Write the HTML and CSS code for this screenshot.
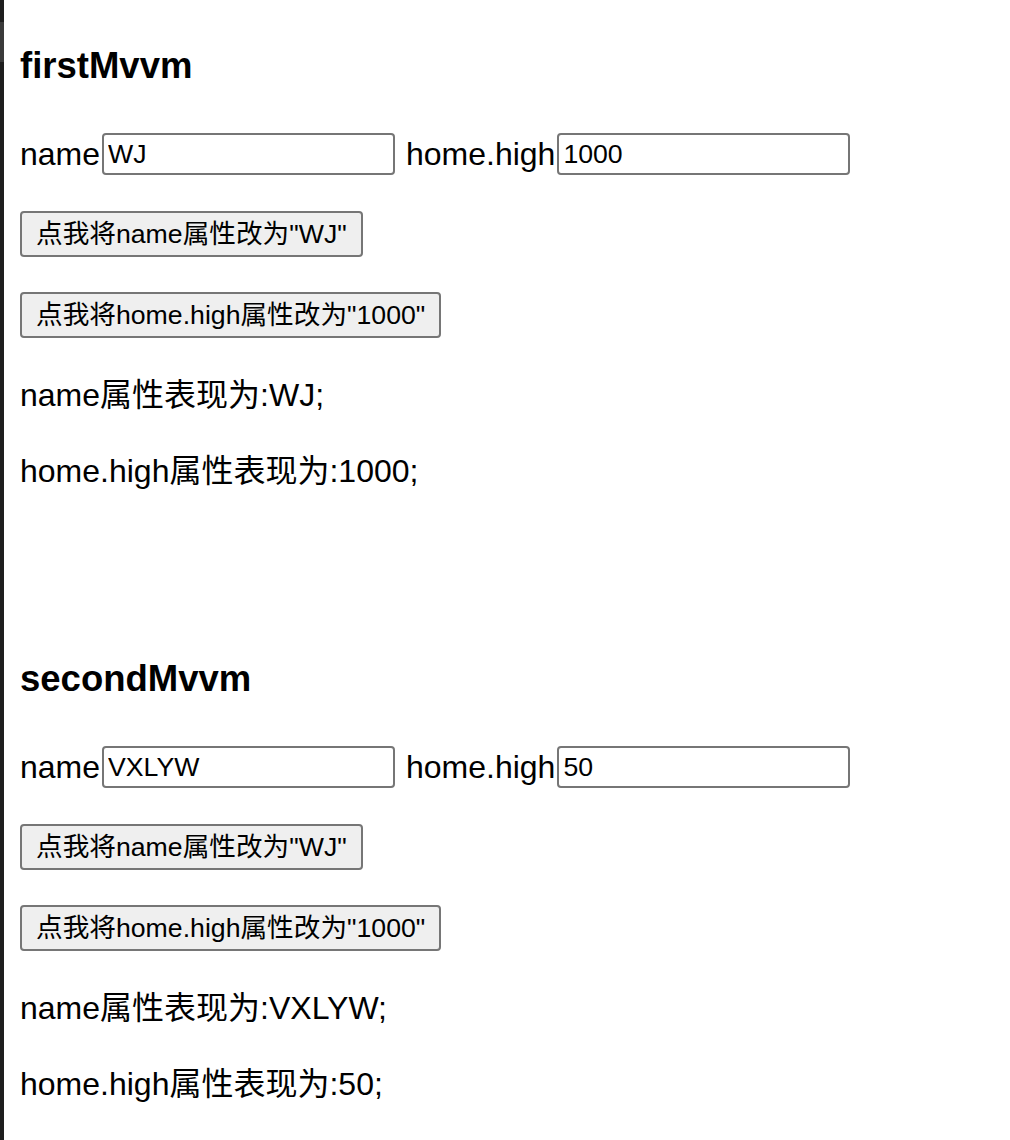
FILE: index.html
```html
<!DOCTYPE html>
<html>
<head>
<meta charset="utf-8">
<link rel="stylesheet" href="styles.css">
</head>
<body>
<div class="page">
  <div class="edge"></div>
  <div class="content">
    <section class="app">
      <h3 class="title">firstMvvm</h3>
      <div class="row">name<input class="field" value="WJ"> home.high<input class="field" value="1000"></div>
      <p class="line"><button class="btn">点我将name属性改为"WJ"</button></p>
      <p class="line"><button class="btn">点我将home.high属性改为"1000"</button></p>
      <p class="text">name属性表现为:WJ;</p>
      <p class="text">home.high属性表现为:1000;</p>
    </section>
    <section class="app">
      <h3 class="title">secondMvvm</h3>
      <div class="row">name<input class="field" value="VXLYW"> home.high<input class="field" value="50"></div>
      <p class="line"><button class="btn">点我将name属性改为"WJ"</button></p>
      <p class="line"><button class="btn">点我将home.high属性改为"1000"</button></p>
      <p class="text">name属性表现为:VXLYW;</p>
      <p class="text">home.high属性表现为:50;</p>
    </section>
  </div>
</div>
</body>
</html>
```

FILE: styles.css
```css
html, body {
  margin: 0;
  padding: 0;
  background: #fff;
}
body {
  font-family: "Liberation Sans", "Noto Sans CJK SC", sans-serif;
  font-size: 32px;
  color: #000;
}
.page {
  display: flex;
  min-height: 1140px;
}
.edge {
  width: 4px;
  flex: none;
  background: linear-gradient(to bottom, #1e1e1e 0, #1e1e1e 22px, #3a3a3a 22px, #3a3a3a 62px, #1e1e1e 62px);
}
.content {
  flex: 1;
  padding: 2px 16px 0;
}
.app {
  padding-bottom: 90px;
}
.title {
  font-size: 36.5px;
  font-weight: bold;
  margin: 42px 0 44px;
  line-height: 44px;
}
.row {
  line-height: 44px;
  display: flex;
  align-items: center;
  white-space: pre;
}
.field {
  font-family: "Liberation Sans", "Noto Sans CJK SC", sans-serif;
  font-size: 26.67px;
  width: 293px;
  height: 42px;
  box-sizing: border-box;
  border: 2px solid #767676;
  border-radius: 4px;
  padding: 0 4px;
  margin: 0 2px;
  background: #fff;
  color: #000;
}
.line {
  margin: 35px 0;
  line-height: 0;
}
.btn {
  font-family: "Liberation Sans", "Noto Sans CJK SC", sans-serif;
  font-size: 26.67px;
  height: 46px;
  padding: 0 14px;
  background: #efefef;
  border: 2px solid #767676;
  border-radius: 4px;
  color: #000;
  line-height: 40px;
}
.text {
  margin: 32px 0;
  line-height: 44px;
}
```
